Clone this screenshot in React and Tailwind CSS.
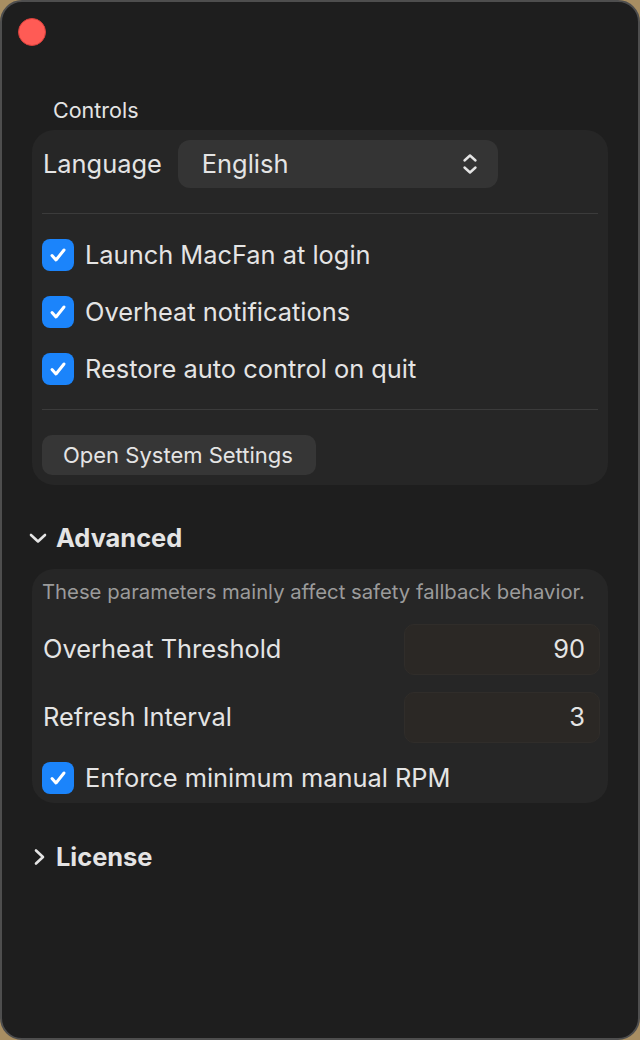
import React from "react";

function Check() {
  return (
    <span className="flex h-[32px] w-[32px] shrink-0 items-center justify-center rounded-[8px] bg-[#1b84fb]">
      <svg width="20" height="20" viewBox="0 0 20 20" fill="none">
        <path d="M4 10.5l4 4.5 8-10" stroke="#fff" strokeWidth="3" strokeLinecap="round" strokeLinejoin="round" />
      </svg>
    </span>
  );
}

function CheckRow({ label }) {
  return (
    <label className="flex items-center gap-[11px] text-[25.4px] leading-[32px] text-[#e4e4e4]">
      <Check />
      <span>{label}</span>
    </label>
  );
}

function NumberField({ label, value }) {
  return (
    <div className="flex items-center justify-between">
      <span className="pl-[1px] text-[25.4px] text-[#e4e4e4]">{label}</span>
      <div className="flex h-[51px] w-[196px] items-center justify-end rounded-[10px] border border-[#302d2a] bg-[#2b2825] pr-[14px] text-[25.4px] text-[#e4e4e4]">
        {value}
      </div>
    </div>
  );
}

function Divider() {
  return <div className="h-px bg-[#3b3b3b]" />;
}

export default function App() {
  return (
    <div className="h-[1040px] w-[640px] bg-[#a88e62]" style={{ fontFamily: "Inter, 'Noto Sans', sans-serif" }}>
      <div className="flex h-full w-full flex-col rounded-[22px] border-2 border-[#4e4e4e] bg-[#1e1e1e] px-[30px]">
        <div className="pt-[16px]">
          <span className="-ml-[14px] block h-[28px] w-[28px] rounded-full border border-[#d8403b] bg-[#ff5b55]" />
        </div>

        <div className="mt-[52px] pl-[21px] text-[21.5px] leading-[24px] text-[#e4e4e4]">Controls</div>

        <section className="mt-[8px] flex flex-col rounded-[22px] bg-[#262626] px-[10px] pt-[10px] pb-[10px]">
          <div className="flex items-center gap-[16px]">
            <span className="pl-[1px] text-[25.4px] text-[#e4e4e4]">Language</span>
            <div className="flex h-[48px] w-[320px] items-center justify-between rounded-[12px] bg-[#343434] pl-[24px] pr-[20px] text-[25.4px] text-[#e4e4e4]">
              <span>English</span>
              <svg width="16" height="24" viewBox="0 0 16 24" fill="none">
                <path d="M2.5 8.5L8 3.5l5.5 5" stroke="#e4e4e4" strokeWidth="2.4" strokeLinecap="round" strokeLinejoin="round" />
                <path d="M2.5 15.5L8 20.5l5.5-5" stroke="#e4e4e4" strokeWidth="2.4" strokeLinecap="round" strokeLinejoin="round" />
              </svg>
            </div>
          </div>
          <div className="mt-[25px] mb-[25px]">
            <Divider />
          </div>
          <div className="flex flex-col gap-[25px]">
            <CheckRow label="Launch MacFan at login" />
            <CheckRow label="Overheat notifications" />
            <CheckRow label="Restore auto control on quit" />
          </div>
          <div className="mt-[24px] mb-[25px]">
            <Divider />
          </div>
          <button className="h-[40px] w-[274px] rounded-[10px] bg-[#363636] pl-[21px] text-left text-[22px] text-[#e4e4e4]">
            Open System Settings
          </button>
        </section>

        <div className="mt-[39px] -ml-[3px] flex items-center gap-[9px] text-[25.4px] leading-[28px] font-bold text-[#e4e4e4]">
          <svg width="18" height="12" viewBox="0 0 18 12" fill="none">
            <path d="M2 3l7 6.5L16 3" stroke="#e4e4e4" strokeWidth="2.6" strokeLinecap="round" strokeLinejoin="round" />
          </svg>
          <span>Advanced</span>
        </div>

        <section className="mt-[17px] flex flex-col rounded-[22px] bg-[#262626] pl-[10px] pr-[8px] pt-[12px] pb-[9px]">
          <p className="text-[20.3px] leading-[22px] text-[#9b9b9b]">These parameters mainly affect safety fallback behavior.</p>
          <div className="mt-[21px] flex flex-col gap-[17px]">
            <NumberField label="Overheat Threshold" value="90" />
            <NumberField label="Refresh Interval" value="3" />
          </div>
          <div className="mt-[19px]">
            <CheckRow label="Enforce minimum manual RPM" />
          </div>
        </section>

        <div className="mt-[40px] flex items-center gap-[9px] pl-[1px] text-[25.4px] leading-[28px] font-bold text-[#e4e4e4]">
          <svg width="14" height="18" viewBox="0 0 14 18" fill="none">
            <path d="M3 2.5l7 6.5-7 6.5" stroke="#e4e4e4" strokeWidth="2.6" strokeLinecap="round" strokeLinejoin="round" />
          </svg>
          <span>License</span>
        </div>
      </div>
    </div>
  );
}
